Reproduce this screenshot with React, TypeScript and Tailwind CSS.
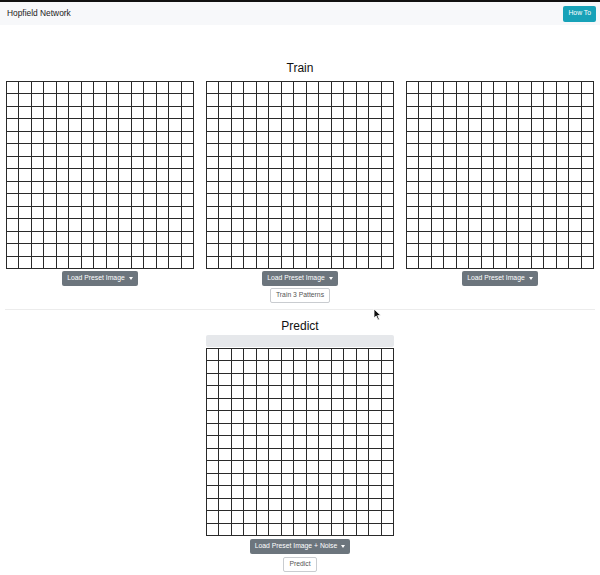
import React from "react";

const cells = Array.from({ length: 225 }, (_, i) => i);

function Grid() {
  return (
    <div className="grid h-[188px] w-[188px] grid-cols-15 grid-rows-15 gap-px bg-[#2a2a2a] p-px">
      {cells.map((i) => (
        <div key={i} className="bg-white" />
      ))}
    </div>
  );
}

function Caret() {
  return (
    <span className="ml-[4px] inline-block h-0 w-0 border-x-[2.5px] border-t-[3px] border-x-transparent border-t-white" />
  );
}

function DarkButton({ label }: { label: string }) {
  return (
    <button className="flex h-[15px] items-center rounded-[2px] bg-[#6c757d] px-[5px] text-[6.8px] text-white">
      {label}
      <Caret />
    </button>
  );
}

function OutlineButton({ label }: { label: string }) {
  return (
    <button className="flex h-[15px] items-center rounded-[2px] border border-[#c9ccd0] bg-white px-[5px] text-[6.8px] text-[#555]">
      {label}
    </button>
  );
}

function Cursor() {
  return (
    <svg
      className="absolute left-[373px] top-[308px]"
      width="9"
      height="13"
      viewBox="0 0 9 13"
    >
      <path
        d="M1 1 L1 10 L3.2 8 L5 12 L6.4 11.4 L4.7 7.5 L7.8 7.5 Z"
        fill="#111"
        stroke="#fff"
        strokeWidth="0.8"
      />
    </svg>
  );
}

export default function App() {
  return (
    <div
      className="relative min-h-[575px] w-[600px] bg-white"
      style={{ fontFamily: '"Liberation Sans", Arial, sans-serif' }}
    >
      <nav className="flex h-[25px] items-center justify-between border-t-2 border-[#111] bg-[#f7f8fa] pl-[7px] pr-[4px]">
        <span className="text-[8.4px] text-[#222]">Hopfield Network</span>
        <button className="flex h-[16px] items-center rounded-[2px] bg-[#17a2b8] px-[5px] text-[6.8px] text-white">
          How To
        </button>
      </nav>

      <section className="mt-[36px] flex flex-col items-center">
        <h2 className="text-[12px] leading-[14px] font-medium text-[#111]">Train</h2>
        <div className="mt-[6px] flex w-full justify-between px-[6px]">
          {[0, 1, 2].map((k) => (
            <div key={k} className="flex flex-col items-center">
              <Grid />
              <div className="mt-[2px]">
                <DarkButton label="Load Preset Image" />
              </div>
            </div>
          ))}
        </div>
        <div className="mt-[2px]">
          <OutlineButton label="Train 3 Patterns" />
        </div>
      </section>

      <hr className="mx-[5px] mt-[6px] border-[#ececec]" />

      <section className="mt-[9px] flex flex-col items-center">
        <h2 className="text-[12px] leading-[14px] font-medium text-[#111]">Predict</h2>
        <div className="mt-[2px] h-[12px] w-[188px] rounded-[2px] bg-[#e6e8eb]" />
        <div className="mt-px">
          <Grid />
        </div>
        <div className="mt-[3px]">
          <DarkButton label="Load Preset Image + Noise" />
        </div>
        <div className="mt-[3px]">
          <OutlineButton label="Predict" />
        </div>
      </section>

      <Cursor />
    </div>
  );
}
